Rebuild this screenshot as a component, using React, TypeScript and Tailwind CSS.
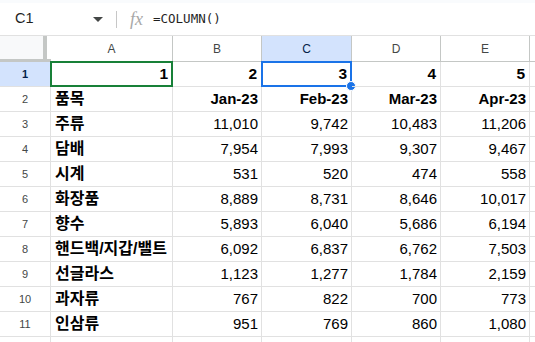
import React from 'react'

const COLS = ['A', 'B', 'C', 'D', 'E']

const HEAD = ['품목', 'Jan-23', 'Feb-23', 'Mar-23', 'Apr-23']

const ROWS: string[][] = [
  ['주류', '11,010', '9,742', '10,483', '11,206'],
  ['담배', '7,954', '7,993', '9,307', '9,467'],
  ['시계', '531', '520', '474', '558'],
  ['화장품', '8,889', '8,731', '8,646', '10,017'],
  ['향수', '5,893', '6,040', '5,686', '6,194'],
  ['핸드백/지갑/밸트', '6,092', '6,837', '6,762', '7,503'],
  ['선글라스', '1,123', '1,277', '1,784', '2,159'],
  ['과자류', '767', '822', '700', '773'],
  ['인삼류', '951', '769', '860', '1,080'],
]

const line = 'border-r border-b border-[#e1e1e1]'
const font = { fontFamily: '"Liberation Sans", Arial, "Noto Sans CJK KR", sans-serif' }

function RowHead({ n, active }: { n?: number; active?: boolean }) {
  return (
    <div
      className={`${line} h-[25px] flex items-center justify-center text-[11px] ${
        active ? 'bg-[#d3e3fd] text-[#041e49] font-bold' : 'bg-white text-[#444746]'
      }`}
    >
      {n}
    </div>
  )
}

export default function App() {
  return (
    <div className="w-[535px] h-[342px] overflow-hidden bg-white text-black" style={font}>
      {/* formula bar */}
      <div className="h-[3px] bg-[#f9fbfd]" />
      <div className="h-[33px] flex items-center border-b border-[#e1e1e1]">
        <div className="w-[110px] flex items-center pl-[15px] pr-[7px] text-[14.5px] text-[#1f1f1f]">
          <span className="flex-1">C1</span>
          <svg width="10" height="5" viewBox="0 0 10 5">
            <path d="M0 0h10L5 5z" fill="#444746" />
          </svg>
        </div>
        <div className="w-px h-[17px] bg-[#c7c7c7] ml-[6px]" />
        <span
          className="ml-[13px] text-[18px] italic text-[#a8a8a8] leading-none"
          style={{ fontFamily: '"Liberation Serif", serif' }}
        >
          fx
        </span>
        <span
          className="ml-[10px] text-[12.5px] text-[#1f1f1f]"
          style={{ fontFamily: '"DejaVu Sans Mono", monospace' }}
        >
          =COLUMN()
        </span>
      </div>

      <div className="grid grid-cols-[51px_122px_89px_90px_89px_89px_1fr]">
        {/* column header row */}
        <div className="h-[26px] flex border-b-[3px] border-[#c4c7c5]">
          <div className="w-[47px] bg-[#f8f9fa] border-r-[4px] border-[#c4c7c5]" />
        </div>
        {COLS.map((c) => (
          <div
            key={c}
            className={`h-[26px] border-r border-b border-[#c4c7c5] flex items-center justify-center text-[12px] ${
              c === 'C' ? 'bg-[#d3e3fd] text-[#041e49]' : 'bg-white text-[#444746]'
            }`}
          >
            {c}
          </div>
        ))}
        <div className="h-[26px] border-b border-[#c4c7c5]" />

        {/* row 1 */}
        <RowHead n={1} active />
        {[1, 2, 3, 4, 5].map((v) => (
          <div key={v} className={`${line} relative h-[25px] flex items-center justify-end pr-[4px] text-[15.5px] font-bold`}>
            {v}
            {v === 1 && <div className="absolute -inset-px border-2 border-[#188038]" />}
            {v === 3 && (
              <div className="absolute -inset-px border-2 border-[#1a73e8]">
                <div className="absolute -right-[6px] -bottom-[6px] w-[10px] h-[10px] rounded-full bg-[#1a73e8] border border-white" />
              </div>
            )}
          </div>
        ))}
        <div className="h-[25px] border-b border-[#e1e1e1]" />

        {/* row 2 */}
        <RowHead n={2} />
        {HEAD.map((h, i) => (
          <div
            key={h}
            className={`${line} h-[25px] flex items-center font-bold ${
              i === 0 ? 'justify-start pl-[4px] text-[16px]' : 'justify-end pr-[3px] text-[15px]'
            }`}
          >
            {h}
          </div>
        ))}
        <div className="h-[25px] border-b border-[#e1e1e1]" />

        {ROWS.map((r, ri) => (
          <React.Fragment key={ri}>
            <RowHead n={ri + 3} />
            {r.map((cell, i) => (
              <div
                key={i}
                className={`${line} h-[25px] flex items-center whitespace-nowrap ${
                  i === 0 ? 'justify-start pl-[4px] font-bold text-[16px]' : 'justify-end pr-[3px] text-[15px]'
                }`}
              >
                {cell}
              </div>
            ))}
            <div className="h-[25px] border-b border-[#e1e1e1]" />
          </React.Fragment>
        ))}

        {/* row 12, cut off */}
        <RowHead />
        {[0, 1, 2, 3, 4].map((i) => (
          <div key={i} className={`${line} h-[25px]`} />
        ))}
        <div className="h-[25px]" />
      </div>
    </div>
  )
}
